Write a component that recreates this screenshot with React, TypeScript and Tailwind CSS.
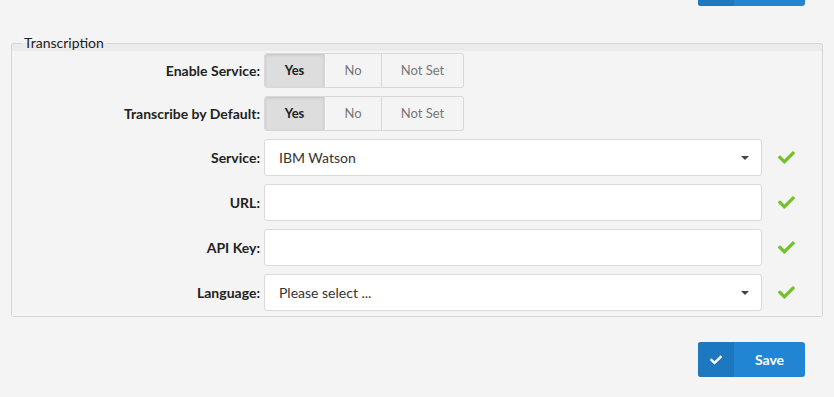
import { FaCheck } from 'react-icons/fa'

const font = { fontFamily: 'Lato, "Open Sans", sans-serif' }

function Toggle() {
  return (
    <div className="flex h-[35px] w-[200px] rounded-[3px] border border-[#d8d8d8] text-[13px]">
      <div className="flex w-[59px] items-center justify-center rounded-l-[3px] bg-[#dddddd] font-bold text-[#222] shadow-[inset_0_1px_3px_rgba(0,0,0,0.12)]">
        Yes
      </div>
      <div className="flex w-[57px] items-center justify-center border-l border-[#d8d8d8] text-[#777]">No</div>
      <div className="flex flex-1 items-center justify-center border-l border-[#d8d8d8] text-[#777]">Not Set</div>
    </div>
  )
}

function Field({ value, select }: { value?: string; select?: boolean }) {
  return (
    <div className="flex h-[37px] w-[498px] items-center justify-between rounded-[3px] border border-[#dadada] bg-white pl-[14px] pr-[12px] text-[14px] text-[#333]">
      <span>{value}</span>
      {select && <span className="h-0 w-0 border-x-[4px] border-t-[4px] border-x-transparent border-t-[#444]" />}
    </div>
  )
}

function Row({ label, children, check }: { label: string; children: React.ReactNode; check?: boolean }) {
  return (
    <div className="flex items-center">
      <div className="w-[252px] pr-[4px] text-right text-[14px] font-bold text-[#222]">{label}</div>
      {children}
      {check && <FaCheck className="ml-[16px] text-[17px] text-[#74c22b]" />}
    </div>
  )
}

export default function App() {
  return (
    <div className="min-h-screen bg-[#f4f4f4]" style={font}>
      <div className="flex justify-end pr-[29px]">
        <div className="flex h-[6px] w-[107px] overflow-hidden rounded-b-[3px] bg-[#2285d3]">
          <div className="w-[36px] bg-[#1e78c0]" />
        </div>
      </div>

      <fieldset className="mx-[11px] mt-[29px] rounded-[3px] border border-[#d6d6d6] bg-[#ebebeb]">
        <legend className="ml-[10px] px-[2px] text-[14px] leading-[16px] text-[#222]">Transcription</legend>
        <div className="flex flex-col gap-2 bg-[#f4f4f4] pt-[2px] pb-[5px]">
          <Row label="Enable Service:">
            <Toggle />
          </Row>
          <Row label="Transcribe by Default:">
            <Toggle />
          </Row>
          <Row label="Service:" check>
            <Field value="IBM Watson" select />
          </Row>
          <Row label="URL:" check>
            <Field />
          </Row>
          <Row label="API Key:" check>
            <Field />
          </Row>
          <Row label="Language:" check>
            <Field value="Please select ..." select />
          </Row>
        </div>
      </fieldset>

      <div className="mt-[25px] flex justify-end pr-[29px]">
        <button className="flex h-[35px] w-[107px] overflow-hidden rounded-[3px] bg-[#2285d3] text-[14px] font-bold text-white">
          <span className="flex h-full w-[36px] items-center justify-center bg-[#1e78c0]">
            <FaCheck className="text-[12px]" />
          </span>
          <span className="flex flex-1 items-center justify-center">Save</span>
        </button>
      </div>
    </div>
  )
}
